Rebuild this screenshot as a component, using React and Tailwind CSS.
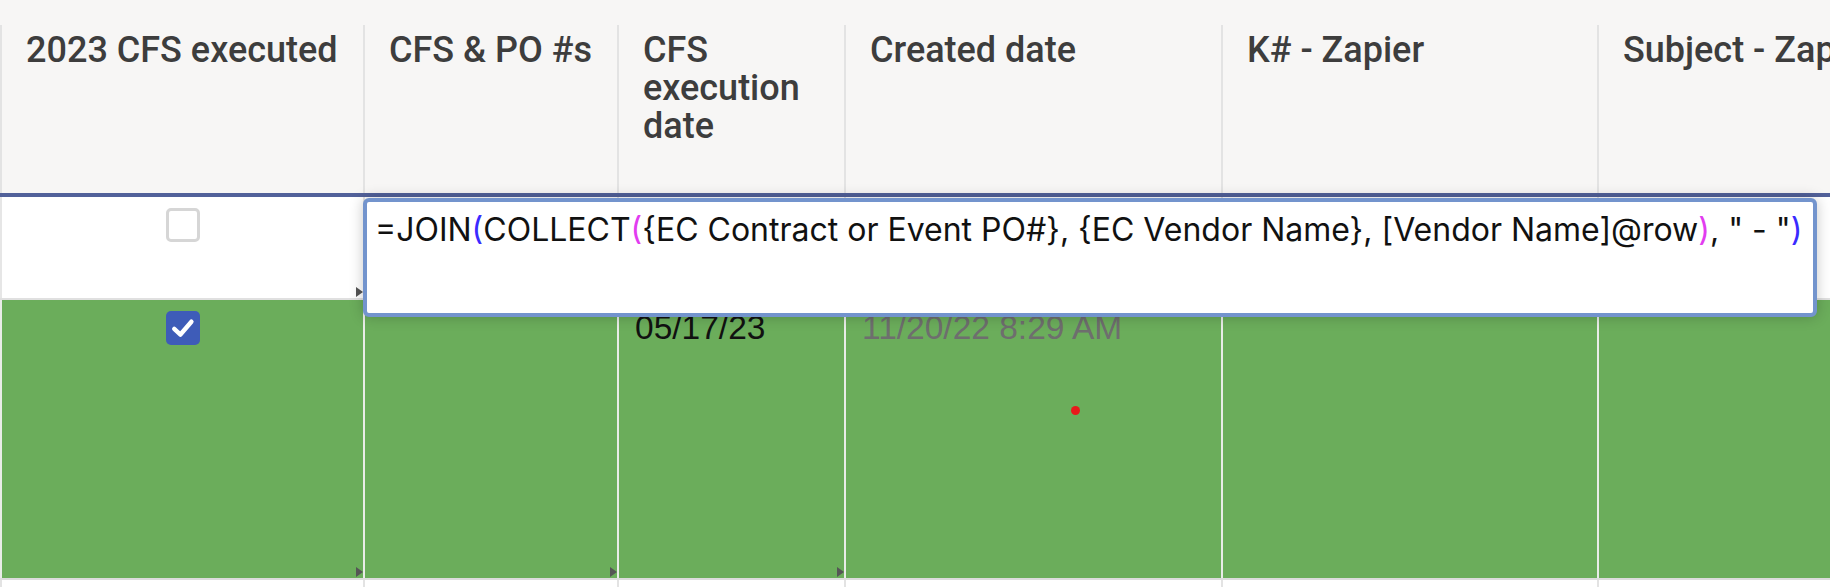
import React from "react";

const cols = [
  "w-[365px] border-l-2",
  "w-[254px]",
  "w-[227px]",
  "w-[377px]",
  "w-[376px]",
  "w-[400px]",
];

function Tri() {
  return (
    <div className="absolute right-0 bottom-[1px] w-0 h-0 border-t-[5px] border-b-[5px] border-l-[7px] border-t-transparent border-b-transparent border-l-[#555555]" />
  );
}

function Header() {
  const titles = [
    "2023 CFS executed",
    "CFS & PO #s",
    "CFS execution date",
    "Created date",
    "K# - Zapier",
    "Subject - Zapier",
  ];
  return (
    <div className="flex h-[168px] bg-[#f7f6f5]">
      {titles.map((t, i) => (
        <div
          key={i}
          className={`${cols[i]} shrink-0 border-r-2 border-[#e3e3e3] pl-[24px] pr-[8px] pt-[6px] text-[36px] leading-[38px] font-medium text-[#3d3d3d] overflow-hidden`}
          style={{ fontFamily: "Roboto, 'Liberation Sans', sans-serif" }}
        >
          {i === 0 || i === 5 ? <span className="whitespace-nowrap">{t}</span> : t}
        </div>
      ))}
    </div>
  );
}

function Check({ checked }) {
  if (checked) {
    return (
      <div className="w-[34px] h-[34px] rounded-[5px] bg-[#3e5cb8] flex items-center justify-center">
        <svg width="28" height="28" viewBox="0 0 24 24" fill="none">
          <path d="M4.5 12.8 L9.8 17.6 L19.2 6.6" stroke="white" strokeWidth="3.8" strokeLinecap="round" strokeLinejoin="round" />
        </svg>
      </div>
    );
  }
  return <div className="w-[34px] h-[34px] rounded-[5px] border-[3px] border-[#d6d6d6] bg-white" />;
}

export default function App() {
  return (
    <div className="relative w-[1830px] h-[587px] overflow-hidden bg-white">
      <div className="h-[25px] bg-[#f7f6f5]" />
      <Header />
      <div className="h-[4px] bg-[#52619a]" />

      {/* Row 1 */}
      <div className="flex h-[103px] bg-white border-b-2 border-[#e0e0e0]">
        {cols.map((c, i) => (
          <div key={i} className={`${c} shrink-0 relative border-r-2 border-[#e6e6e6]`}>
            {i === 0 && (
              <>
                <div className="flex justify-center pt-[11px]">
                  <Check checked={false} />
                </div>
                <Tri />
              </>
            )}
          </div>
        ))}
      </div>

      {/* Row 2 */}
      <div className="flex h-[280px] bg-[#6bad5b] border-b-2 border-[#dcdcdc]">
        {cols.map((c, i) => (
          <div key={i} className={`${c} shrink-0 relative border-r-2 border-[#e9ece8]`}>
            {i === 0 && (
              <div className="flex justify-center pt-[11px]">
                <Check checked={true} />
              </div>
            )}
            {i === 2 && (
              <div
                className="pl-[16px] pt-[10px] text-[33.5px] leading-[36px] text-[#111111]"
                style={{ fontFamily: "'Liberation Sans', Arial, sans-serif" }}
              >
                05/17/23
              </div>
            )}
            {i === 3 && (
              <div
                className="pl-[16px] pt-[10px] text-[33.5px] leading-[36px] text-[#6e6e6e] whitespace-nowrap"
                style={{ fontFamily: "'Liberation Sans', Arial, sans-serif" }}
              >
                11/20/22 8:29 AM
              </div>
            )}
            {i < 3 && <Tri />}
          </div>
        ))}
      </div>

      {/* Row 3 */}
      <div className="flex h-[20px] bg-white">
        {cols.map((c, i) => (
          <div key={i} className={`${c} shrink-0 border-r-2 border-[#e3e3e3]`} />
        ))}
      </div>

      {/* Formula editor overlay */}
      <div className="absolute left-[363px] top-[198px] w-[1454px] h-[119px] rounded-[6px] border-[4px] border-[#7394cd] bg-white shadow-[0_0_14px_rgba(0,0,0,0.22)] pl-[8px] pt-[9px]">
        <div
          className="text-[32px] leading-[38px] text-[#111111] whitespace-nowrap"
          style={{ fontFamily: "Inter, 'Noto Sans', sans-serif" }}
        >
          =JOIN<span className="text-[#3a2bff]">(</span>COLLECT<span className="text-[#e23cf0]">(</span>
          {"{EC Contract or Event PO#}, {EC Vendor Name}, [Vendor Name]@row"}
          <span className="text-[#e23cf0]">)</span>, " - "<span className="text-[#3a2bff]">)</span>
        </div>
      </div>

      {/* red dot */}
      <div className="absolute left-[1071px] top-[406px] w-[9px] h-[9px] rounded-full bg-[#e8191b]" />
    </div>
  );
}
